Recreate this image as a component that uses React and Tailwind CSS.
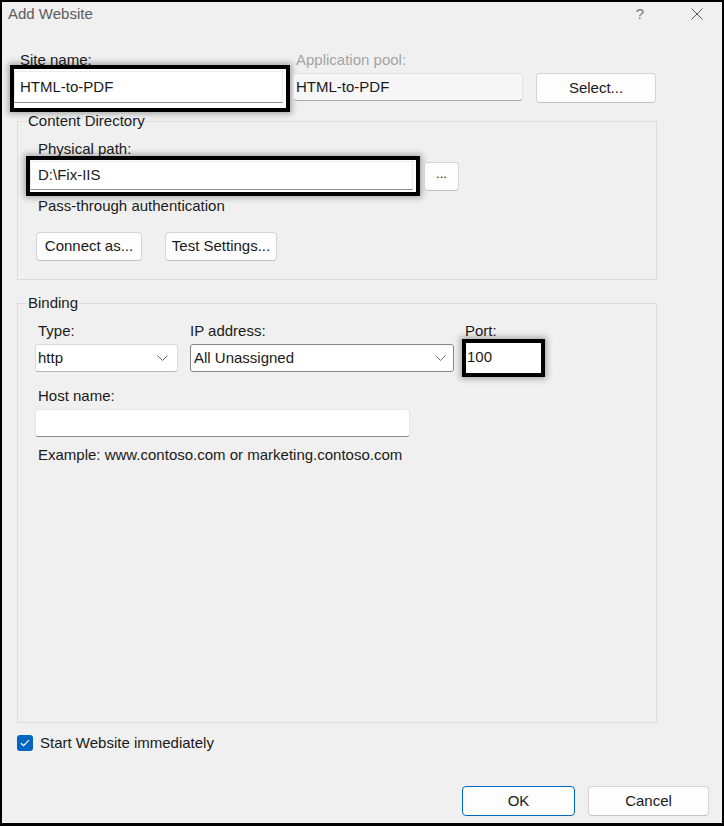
import React from "react";

function Chevron() {
  return (
    <svg width="11" height="6" viewBox="0 0 11 6" fill="none">
      <path d="M0.5 0.5 L5.5 5.5 L10.5 0.5" stroke="#6a6a6a" strokeWidth="1" />
    </svg>
  );
}

function Btn({ children, className = "" }) {
  return (
    <div
      className={
        "flex items-center justify-center bg-[#fdfdfd] border border-[#d4d4d4] border-b-[#c2c2c2] rounded-[4px] text-[#1a1a1a] " +
        className
      }
    >
      {children}
    </div>
  );
}

export default function App() {
  return (
    <div className="w-[724px] h-[826px] border-2 border-b-[3px] border-black bg-[#f0f0f0] text-[15px] text-[#1a1a1a] font-['Liberation_Sans',Arial,sans-serif] flex flex-col overflow-hidden">
      {/* title bar */}
      <div className="h-[24px] flex items-center pl-[6px]">
        <span className="text-[#5c5c5c] leading-[20px]">Add Website</span>
        <div className="ml-auto flex items-center mr-[19px]">
          <span className="w-[20px] text-center text-[#7a7a7a] leading-[20px]">?</span>
          <svg className="ml-[41px]" width="12" height="12" viewBox="0 0 12 12">
            <path d="M0.5 0.5 L11.5 11.5 M11.5 0.5 L0.5 11.5" stroke="#555" strokeWidth="1" />
          </svg>
        </div>
      </div>

      {/* row 1 */}
      <div className="mt-[24px] flex items-start pl-[8px]">
        <div className="w-[280px] flex flex-col">
          <div className="h-[15px] leading-[20px] pl-[10px]">Site name:</div>
          <div className="h-[47px] border-4 border-black shadow-[0_0_6px_2px_rgba(0,0,0,0.3)] pt-[2px] pb-[5px] pr-[3px] bg-white">
            <div className="h-full bg-white border border-[#ececec] border-b-[#8c8c8c] flex items-center pl-[5px]">
              HTML-to-PDF
            </div>
          </div>
        </div>
        <div className="ml-[3px] w-[230px] flex flex-col">
          <div className="h-[23px] leading-[20px] pl-[3px] text-[#a3a3a3]">Application pool:</div>
          <div className="h-[28px] bg-[#f6f6f6] border border-[#e3e3e3] border-b-[#a8a8a8] rounded-[4px] flex items-center pl-[2px]">
            HTML-to-PDF
          </div>
        </div>
        <Btn className="ml-[13px] mt-[23px] w-[120px] h-[30px]">Select...</Btn>
      </div>

      {/* Content Directory */}
      <fieldset className="ml-[15px] w-[640px] border border-[#dcdcdc]">
        <legend className="ml-[9px] px-px leading-[18px]">Content Directory</legend>
        <div className="flex flex-col">
          <div className="mt-[9px] h-[17px] leading-[20px] pl-[20px]">Physical path:</div>
          <div className="flex items-center ml-[8px]">
            <div className="w-[394px] h-[40px] border-4 border-black shadow-[0_0_6px_2px_rgba(0,0,0,0.3)] pt-px pb-[2px] pr-[3px] bg-white">
              <div className="h-full bg-white border border-[#ececec] border-b-[#8c8c8c] flex items-center pl-[7px]">
                D:\Fix-IIS
              </div>
            </div>
            <Btn className="ml-[4px] w-[35px] h-[29px] text-[13px] pb-[4px]">...</Btn>
          </div>
          <div className="leading-[20px] pl-[20px]">Pass-through authentication</div>
          <div className="mt-[16px] pl-[18px] flex gap-[23px] pb-[18px]">
            <Btn className="w-[106px] h-[29px]">Connect as...</Btn>
            <Btn className="w-[112px] h-[29px]">Test Settings...</Btn>
          </div>
        </div>
      </fieldset>

      {/* Binding */}
      <fieldset className="mt-[14px] ml-[15px] w-[640px] h-[429px] border border-[#dcdcdc]">
        <legend className="ml-[9px] px-px leading-[18px]">Binding</legend>
        <div className="flex flex-col">
          <div className="mt-[9px] flex items-start pl-[17px]">
            <div className="w-[143px] flex flex-col">
              <div className="h-[23px] leading-[20px] pl-[3px]">Type:</div>
              <div className="h-[28px] bg-white border border-[#dadada] border-b-[#b5b5b5] rounded-[3px] flex items-center justify-between pl-[2px] pr-[9px]">
                <span>http</span>
                <Chevron />
              </div>
            </div>
            <div className="ml-[12px] w-[264px] flex flex-col">
              <div className="h-[23px] leading-[20px]">IP address:</div>
              <div className="h-[28px] bg-white border border-[#858585] rounded-[3px] flex items-center justify-between pl-[3px] pr-[7px]">
                <span>All Unassigned</span>
                <Chevron />
              </div>
            </div>
            <div className="ml-[8px] flex flex-col">
              <div className="h-[18px] leading-[20px] pl-[3px]">Port:</div>
              <div className="w-[83px] h-[38px] border-4 border-black shadow-[0_0_6px_2px_rgba(0,0,0,0.3)] bg-white pr-[4px] pb-[2px]">
                <div className="h-full bg-white flex items-center pl-px">100</div>
              </div>
            </div>
          </div>
          <div className="mt-[9px] h-[23px] leading-[20px] pl-[20px]">Host name:</div>
          <div className="ml-[17px] w-[375px] h-[28px] bg-white border border-[#e6e6e6] border-b-[#8c8c8c] rounded-[3px]"></div>
          <div className="mt-[8px] leading-[20px] pl-[20px]">Example: www.contoso.com or marketing.contoso.com</div>
        </div>
      </fieldset>

      {/* checkbox */}
      <div className="mt-[10px] ml-[15px] flex items-center">
        <div className="w-[16px] h-[16px] rounded-[3px] bg-[#0067c0] flex items-center justify-center">
          <svg width="10" height="8" viewBox="0 0 10 8" fill="none">
            <path d="M1 4.2 L3.6 6.6 L9 1.2" stroke="white" strokeWidth="1.2" />
          </svg>
        </div>
        <span className="ml-[7px] leading-[20px]">Start Website immediately</span>
      </div>

      {/* buttons */}
      <div className="mt-[33px] flex justify-end pr-[13px] gap-[13px]">
        <div className="w-[113px] h-[30px] flex items-center justify-center bg-[#fdfdfd] border border-[#0067c0] rounded-[4px]">OK</div>
        <Btn className="w-[121px] h-[30px]">Cancel</Btn>
      </div>
    </div>
  );
}
